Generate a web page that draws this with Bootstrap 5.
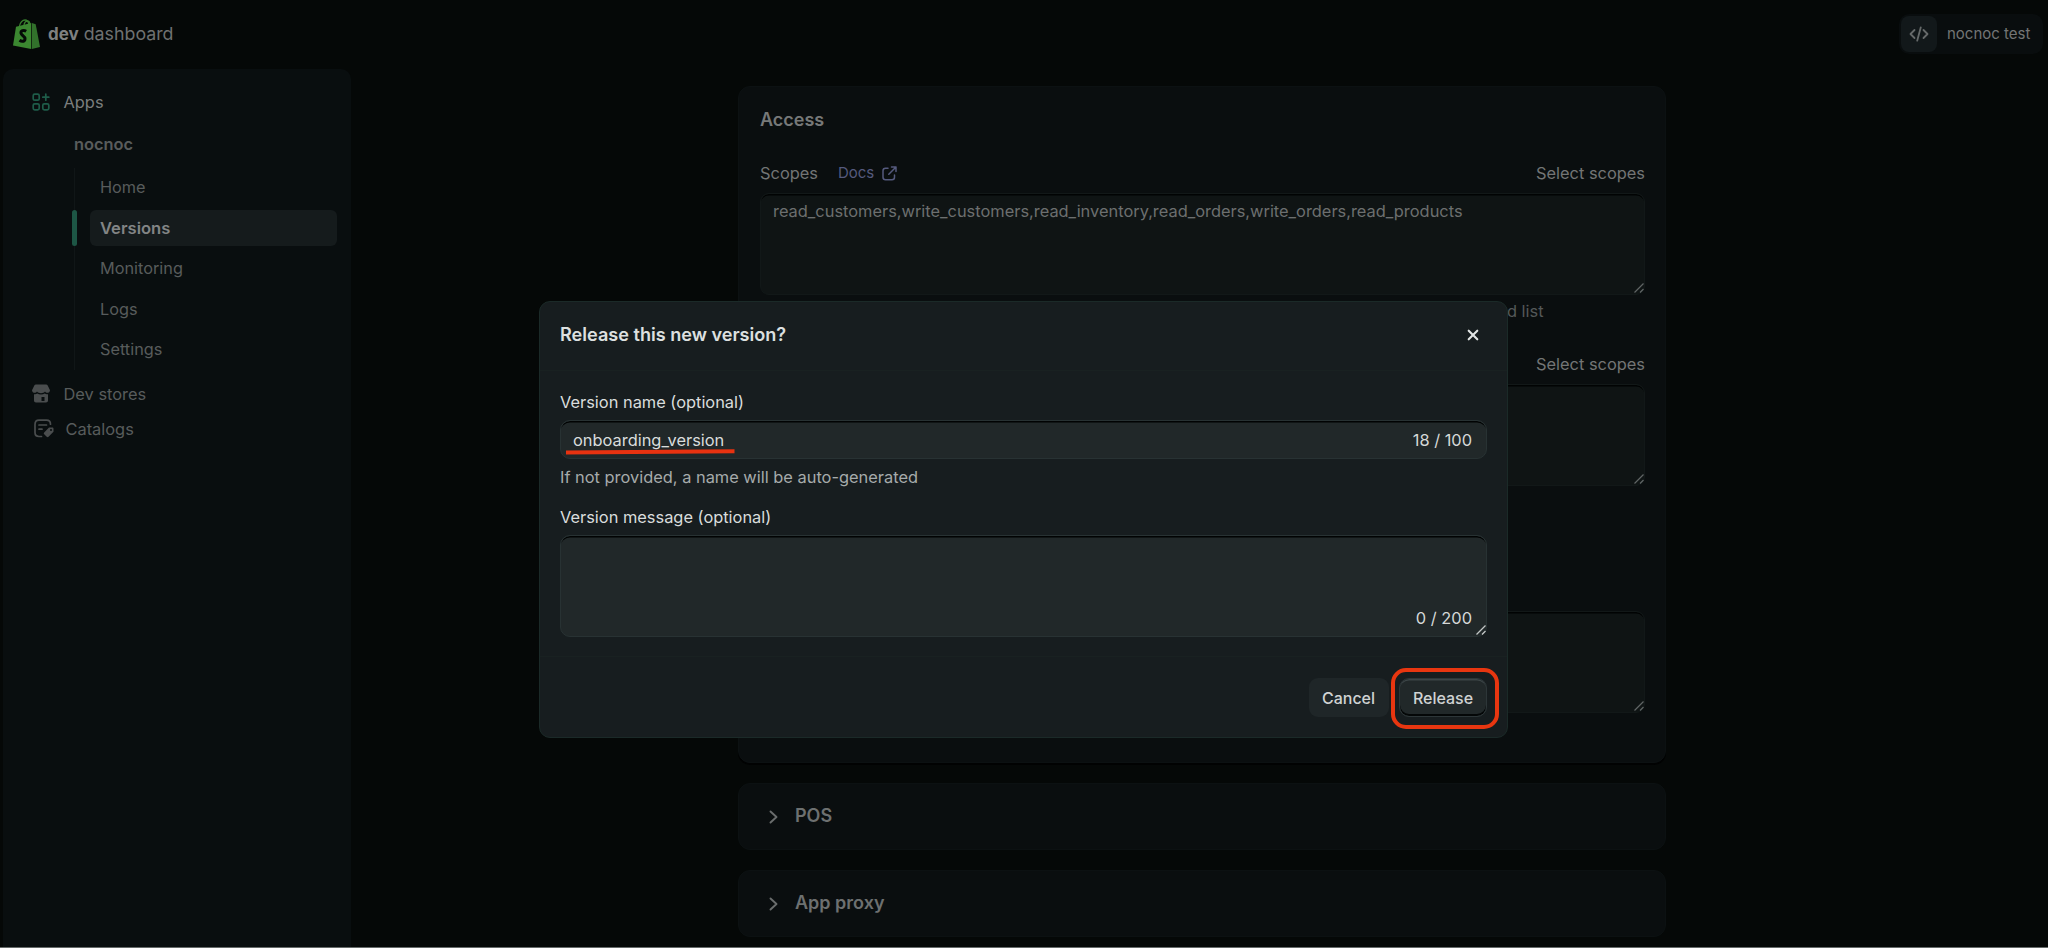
<!DOCTYPE html>
<html lang="en" data-bs-theme="dark">
<head>
<meta charset="utf-8">
<title>dev dashboard</title>
<link rel="stylesheet" href="https://cdn.jsdelivr.net/npm/bootstrap@5.3.0/dist/css/bootstrap.min.css">
<style>
  body { height: 948px; overflow: hidden; background: #050807; color: #737575; font-family: Inter, "Liberation Sans", sans-serif; font-size: 16.4px; line-height: 24px; border-bottom: 1px solid #666b6a; }
  svg { display: block; flex: none; }
  .topbar { height: 69px; padding: 0 5px 0 13px; }
  .brand-name { font-size: 17.8px; color: #6f7171; margin-top: -1px; }
  .brand-name b { font-size: 17px; font-weight: 700; color: #7f8181; }
  .store-chip { height: 40px; width: 144px; margin-top: -1px; border-radius: 10px; background: #090d0e; font-size: 15px; color: #737575; padding-left: 2px; gap: 10px; }
  .store-icon { width: 36px; height: 36px; border-radius: 8px; background: #12181a; color: #666a6a; }
  .shell { height: 878px; padding-left: 3px; }
  .sidebar { width: 348px; padding-top: 15px; border-radius: 10px 10px 0 0; background: #090e0f; color: #585c5c; }
  .side-row { height: 35px; padding-left: 28.5px; gap: 14px; }
  .side-row a { color: inherit; text-decoration: none; }
  .app-name { height: 49px; padding-left: 71px; font-weight: 600; color: #595c5c; }
  .tree { margin-left: 71px; margin-bottom: 6px; padding-right: 14px; border-left: 1px solid #101617; height: 202px; padding-top: 1.4px; }
  .tree a { height: 36px; flex: none; margin: 0 0 4.4px 15px; padding: 0 0 0 10px; border-radius: 6px; color: inherit; font-size: 16.3px; }
  .tree a.active { position: relative; background: #151b1c; color: #828585; font-weight: 600; font-size: 16.6px; }
  .tree a.active::before { content: ""; position: absolute; left: -18.5px; top: 0; width: 5px; height: 36px; border-radius: 3px; background: #1d5645; }
  .content-col { width: 928px; margin-left: 387px; padding-top: 17px; }
  .panel { background: #0a0e0f; border: 1px solid #0c1112; border-radius: 12px; }
  .access { height: 677px; padding: 20px 20px 0 21px; box-shadow: 0 2px 0 #010202; margin-bottom: 20px; }
  .panel h2 { font-size: 18px; line-height: 26px; font-weight: 600; color: #767878; margin: 0; }
  .fold { height: 67px; padding-left: 30px; gap: 17px; margin-bottom: 20px; color: #6a6d6d; }
  .fold h2 { color: #6d7070; margin-top: -1px; }
  .docs { color: #555a7e; font-size: 15px; margin-left: 20px; gap: 8px; }
  .fieldbox { position: relative; }
  .fieldbox textarea, .fieldbox input { display: block; width: 100%; resize: none; font: inherit; outline: 0; box-shadow: inset 0 2px 0 -0.5px #010303 !important; }
  .access textarea { height: 102px; padding: 5px 12px; border-radius: 9px; background: #0f1414; border: 1px solid #121818; color: #6c6f6f; }
  .grip { position: absolute; right: 1.5px; bottom: 2px; }
  .help-dim { color: #545858; }
  .release-dialog { position: absolute; left: 539px; top: 301px; width: 969px; height: 437px; margin: 0; background: #171d1f; border: 1px solid #1b2a28; border-radius: 11px; color: #dadddd; }
  .release-dialog .modal-header { height: 69px; padding: 0 28px 2px 20px; border-bottom: 1px solid #192121; }
  .release-dialog h1 { font-size: 18.1px; font-weight: 600; margin: 0; color: #dde0e0; }
  .release-dialog .modal-body { flex: none; height: 285px; padding: 19px 20px 0; }
  .release-dialog .modal-footer { height: 81px; padding: 21px 20px 0; gap: 10.5px; border-top: 1px solid #192121; align-items: flex-start; }
  .release-dialog .modal-footer > * { margin: 0; }
  .release-dialog label { display: block; line-height: 24px; }
  .release-dialog input, .release-dialog textarea { background: #212829; border: 1px solid #283233; border-radius: 10px; color: #d9dddd; padding: 0 12px; }
  .counter { position: absolute; right: 15px; color: #d5d8d8; font-size: 16.4px; }
  .underline-mark { position: absolute; left: 6px; top: 29px; }
  .btn-plain { width: 80px; height: 39px; padding: 0; background: #1f2628; border: 0; border-radius: 9px; font-size: 16px; font-weight: 500; color: #d0d3d3; }
  .btn-main { width: 88px; height: 39px; padding: 0; background: #212829; border: 1px solid #2d3638; border-radius: 10px; font-size: 16px; font-weight: 500; color: #d0d3d3; box-shadow: inset 0 2px 0 -0.5px #3c4547, inset 0 -2px 0 #040707; }
  .release-wrap { position: relative; }
  .release-wrap::after { content: ""; position: absolute; left: -8px; top: -10px; width: 108px; height: 61px; border: 4px solid #e83610; border-radius: 15px; }
</style>
</head>
<body class="d-flex flex-column">
<header class="topbar d-flex align-items-center justify-content-between">
  <div class="d-flex align-items-center" style="gap:8px">
    <svg width="27" height="30" viewBox="0 0 27 30" style="margin-top:-1px">
      <path d="M6.500 7C7 3.500 9.500 1 12 1c2.300 0 3.500 2 4 5M11 6c.5-2.500 2-4 3.500-4 1.500 0 2.300 1.500 2.500 3.500" fill="none" stroke="#387f2d" stroke-width="1.300"/>
      <path d="M3 7.800 18.200 4v26L0 26.500z" fill="#3b8730"/><path d="m18.900 4 3.800 1.200L27 28l-8.100 2z" fill="#32712b"/>
      <path d="M13.200 12.200C10.300 10.500 7.700 12 8 14.200c.2 2.300 4 2.900 4 5.500 0 2.700-2.900 3.400-5.500 1.600" fill="none" stroke="#050a07" stroke-width="3"/>
    </svg>
    <div class="brand-name"><b>dev</b> dashboard</div>
  </div>
  <div class="store-chip d-flex align-items-center">
    <div class="store-icon d-flex align-items-center justify-content-center">
      <svg width="20" height="16" viewBox="0 0 20 16" fill="none" stroke="currentColor" stroke-width="1.800" stroke-linecap="round" stroke-linejoin="round"><path d="M5.500 4 1.500 8l4 4M14.500 4l4 4-4 4M11.800 1.300 8.200 14.700"/></svg>
    </div>
    <span>nocnoc test</span>
  </div>
</header>

<div class="shell d-flex">
  <nav class="sidebar">
    <div class="side-row d-flex align-items-center" style="color:#7b7e7e">
      <svg width="18" height="18" viewBox="0 0 18 18" fill="none" stroke="#1e5c49" stroke-width="1.700" stroke-linecap="round"><rect x="1.200" y="1.200" width="6" height="6" rx="1.500"/><rect x="1.200" y="10.800" width="6" height="6" rx="1.500"/><rect x="10.800" y="10.800" width="6" height="6" rx="1.500"/><path d="M13.800 1.200v6M10.800 4.200h6"/></svg>
      <a href="#">Apps</a>
    </div>
    <div class="app-name d-flex align-items-center">nocnoc</div>
    <div class="tree d-flex flex-column">
      <a class="nav-link d-flex align-items-center" href="#">Home</a>
      <a class="nav-link d-flex align-items-center active" href="#">Versions</a>
      <a class="nav-link d-flex align-items-center" href="#">Monitoring</a>
      <a class="nav-link d-flex align-items-center" href="#">Logs</a>
      <a class="nav-link d-flex align-items-center" href="#">Settings</a>
    </div>
    <div class="side-row d-flex align-items-center">
      <svg width="18" height="19" viewBox="0 0 18 19" fill="#4a4d4e"><path d="M4 .5h10c.8 0 1.400.4 1.700 1.100L18 6.200c0 2.800-3.800 3.600-5 1.300-1.400 2.300-6.600 2.300-8 0C3.800 9.800 0 9 0 6.200l2.300-4.600C2.600.9 3.200.5 4 .5z"/><path fill-rule="evenodd" d="M2 10.200c1.400.3 2.400 0 3.200-.7 2 1.400 5.600 1.400 7.600 0 .8.7 1.800 1 3.200.7v6.300c0 1.300-.8 2-2 2H4c-1.200 0-2-.7-2-2zM9.500 13v4h3v-4z"/></svg>
      <a href="#">Dev stores</a>
    </div>
    <div class="side-row d-flex align-items-center" style="padding-left:30.5px">
      <svg width="20" height="19" viewBox="0 0 20 19" fill="none" stroke="#4a4d4e" stroke-width="1.700" stroke-linecap="round"><path d="M7.500 17.500H5C2.500 17.500 1 16 1 13.500v-8C1 3 2.500 1.200 5 1.200h7.500c2.500 0 4 1.300 4 4M5 6h7.500M5 10.200h3"/><path d="M15 8.500h3.300c.8 0 1.200.5 1.200 1.200v3.100l-5 5c-.6.6-1.200.6-1.800 0l-2.500-2.500c-.6-.6-.6-1.200 0-1.800z" fill="#4a4d4e" stroke="none"/><circle cx="17" cy="11" r="1" fill="#090e0f" stroke="none"/></svg>
      <a href="#" style="margin-left:-2px">Catalogs</a>
    </div>
  </nav>

  <main class="content-col">
    <section class="panel access">
      <h2>Access</h2>
      <div class="d-flex align-items-center" style="margin-top:28px;height:24px">
        <span>Scopes</span>
        <a class="docs d-flex align-items-center text-decoration-none" href="#">Docs
          <svg width="15" height="15" viewBox="0 0 15 15" fill="none" stroke="currentColor" stroke-width="1.500" stroke-linecap="round" stroke-linejoin="round"><path d="M6 2.300H3.500C2 2.300 1 3.300 1 4.800v6.500c0 1.500 1 2.500 2.500 2.500H10c1.500 0 2.500-1 2.500-2.500V9M9.500 1H14v4.500M14 1 6.800 8.200"/></svg></a>
        <span class="ms-auto">Select scopes</span>
      </div>
      <div class="fieldbox" style="margin-top:8px">
        <textarea class="form-control">read_customers,write_customers,read_inventory,read_orders,write_orders,read_products</textarea>
        <svg class="grip" width="10" height="10" viewBox="0 0 10 10" stroke="#606565" stroke-width="1.200"><path d="M.5 9.500l9-9M6 9.500 9.500 6"/></svg>
      </div>
      <div class="help-dim text-end" style="margin:4px 101.500px 0 0">Separate scopes with commas in a comma-separated list</div>
      <div class="d-flex" style="margin-top:29px"><span>Optional scopes</span><span class="ms-auto">Select scopes</span></div>
      <div class="fieldbox" style="margin-top:8px">
        <textarea class="form-control"></textarea>
        <svg class="grip" width="10" height="10" viewBox="0 0 10 10" stroke="#606565" stroke-width="1.200"><path d="M.5 9.500l9-9M6 9.500 9.500 6"/></svg>
      </div>
      <div class="fieldbox" style="margin-top:125px">
        <textarea class="form-control"></textarea>
        <svg class="grip" width="10" height="10" viewBox="0 0 10 10" stroke="#606565" stroke-width="1.200"><path d="M.5 9.500l9-9M6 9.500 9.500 6"/></svg>
      </div>
    </section>
    <section class="panel fold d-flex align-items-center">
      <svg width="9" height="14" viewBox="0 0 9 14" fill="none" stroke="currentColor" stroke-width="1.900" stroke-linecap="round" stroke-linejoin="round"><path d="m1.500 1.500 6 5.500-6 5.500"/></svg>
      <h2>POS</h2>
    </section>
    <section class="panel fold d-flex align-items-center">
      <svg width="9" height="14" viewBox="0 0 9 14" fill="none" stroke="currentColor" stroke-width="1.900" stroke-linecap="round" stroke-linejoin="round"><path d="m1.500 1.500 6 5.500-6 5.500"/></svg>
      <h2>App proxy</h2>
    </section>
  </main>
</div>

<div class="release-dialog modal-content" role="dialog">
  <div class="modal-header">
    <h1>Release this new version?</h1>
    <svg width="12" height="12" viewBox="0 0 12 12" stroke="#e2e5e5" stroke-width="2.100" stroke-linecap="round"><path d="m1.700 1.700 8.600 8.600M10.300 1.700 1.700 10.300"/></svg>
  </div>
  <div class="modal-body">
    <label for="vname">Version name (optional)</label>
    <div class="fieldbox" style="margin-top:6px">
      <input id="vname" class="form-control" style="height:39px" value="onboarding_version">
      <span class="counter" style="top:8px">18 / 100</span>
      <svg class="underline-mark" width="169" height="6" viewBox="0 0 169 6"><path d="M0 3.500 168.500 2.300" stroke="#e83210" stroke-width="4"/></svg>
    </div>
    <div style="margin-top:6px;color:#a6abab">If not provided, a name will be auto-generated</div>
    <label for="vmsg" style="margin-top:16px">Version message (optional)</label>
    <div class="fieldbox" style="margin-top:6px">
      <textarea id="vmsg" class="form-control" style="height:102px"></textarea>
      <span class="counter" style="bottom:7px">0 / 200</span>
      <svg class="grip" width="10" height="10" viewBox="0 0 10 10" stroke="#c2c6c6" stroke-width="1.300"><path d="M.5 9.500l9-9M6 9.500 9.500 6"/></svg>
    </div>
  </div>
  <div class="modal-footer">
    <button class="btn btn-plain">Cancel</button>
    <div class="release-wrap"><button class="btn btn-main">Release</button></div>
  </div>
</div>
<script src="https://cdn.jsdelivr.net/npm/bootstrap@5.3.0/dist/js/bootstrap.bundle.min.js"></script>
</body>
</html>
